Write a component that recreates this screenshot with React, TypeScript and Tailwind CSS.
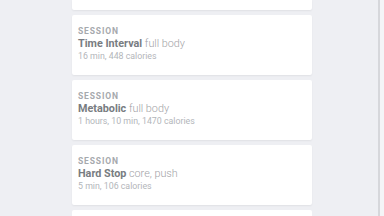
import React from "react";

interface Session {
  name: string;
  tags: string;
  stats: string;
}

const sessions: Session[] = [
  { name: "Time Interval", tags: "full body", stats: "16 min, 448 calories" },
  { name: "Metabolic", tags: "full body", stats: "1 hours, 10 min, 1470 calories" },
  { name: "Hard Stop", tags: "core, push", stats: "5 min, 106 calories" },
];

const SessionCard: React.FC<{ session: Session }> = ({ session }) => {
  return (
    <div className="h-[60px] w-[240px] shrink-0 rounded-[2px] bg-white px-[6px] pt-[10px] shadow-[0_1px_2px_rgba(0,0,0,0.06)]">
      <div className="text-[8.5px] font-bold uppercase leading-[12px] tracking-[0.1em] text-[#a6a9ad]">
        Session
      </div>
      <div className="text-[10.8px] font-light leading-[13px] text-[#9fa2a6]">
        <span className="font-bold text-[#787c81]">{session.name}</span>{" "}
        {session.tags}
      </div>
      <div className="text-[8.8px] leading-[12px] text-[#b3b6ba]">
        {session.stats}
      </div>
    </div>
  );
};

export default function App() {
  return (
    <div
      className="relative h-[216px] w-[384px] overflow-hidden bg-[#eeeff3]"
      style={{ fontFamily: "Roboto, 'Liberation Sans', sans-serif" }}
    >
      <div className="flex flex-col items-center gap-[5px]">
        {/* tail of the previous card, scrolled mostly out of view */}
        <div className="h-[10px] w-[240px] rounded-b-[2px] bg-white shadow-[0_1px_2px_rgba(0,0,0,0.06)]" />
        {sessions.map((s) => (
          <SessionCard key={s.name} session={s} />
        ))}
        <div className="h-[20px] w-[240px] rounded-t-[2px] bg-white" />
      </div>
      <div className="absolute right-[4px] top-0 h-full w-[2px] bg-[#d6d7db]" />
      <div className="absolute right-0 top-0 h-full w-[4px] bg-[#f4f5f7]" />
    </div>
  );
}
